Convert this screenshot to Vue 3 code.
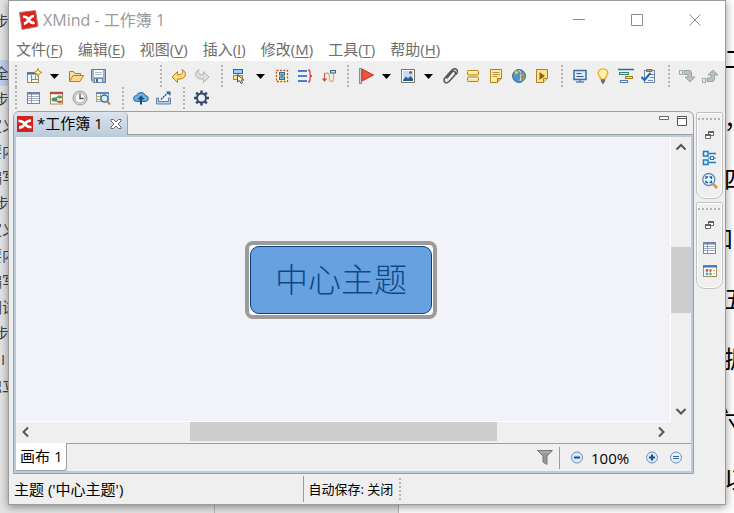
<script setup>
import { ref } from 'vue'

const outline = [
  { text: '步' }, { text: '' }, { text: '全', active: true }, { text: '步' }, { text: '定义', wide: true },
  { text: '要内', wide: true }, { text: '编写', wide: true }, { text: '步' }, { text: '定义', wide: true },
  { text: '要内', wide: true }, { text: '编写', wide: true }, { text: '调试', wide: true }, { text: '步' },
  { text: 'I', narrow: true }, { text: '独立', wide: true },
]

const paragraphs = [
  { text: '二' }, { text: '，' }, { text: '四' }, { text: '和', tail: true },
  { text: '五' }, { text: '据' }, { text: '六', tuck: true }, { text: '以' },
]

const menus = [
  ['文件', 'F'], ['编辑', 'E'], ['视图', 'V'], ['插入', 'I'], ['修改', 'M'], ['工具', 'T'], ['帮助', 'H'],
]

const toolRows = [
  [
    { wide: true, items: ['new', 'caret', 'open', 'save'] },
    { items: ['undo', 'redo'] },
    { items: ['topic', 'caret', 'boundary', 'summary', 'relation'] },
    { items: ['flag', 'caret', 'image', 'caret', 'clip', 'label', 'note', 'globe', 'audio'] },
    { items: ['present', 'bulb', 'gantt', 'task'] },
    { items: ['drill', 'up'] },
  ],
  [
    { items: ['sheet', 'styles', 'history', 'find'] },
    { items: ['cloud', 'share'] },
    { items: ['gear'] },
  ],
]

const sidePanels = [
  { id: 'views', items: ['outline', 'overview'] },
  { id: 'tools', items: ['sheet', 'markers'] },
]

const names = {
  new: '新建', caret: '更多', open: '打开', save: '保存', undo: '撤销', redo: '重做', topic: '主题',
  boundary: '外框', summary: '概要', relation: '联系', flag: '图标', image: '图片', clip: '附件',
  label: '标签', note: '备注', globe: '超链接', audio: '录音', present: '演示', bulb: '头脑风暴',
  gantt: '甘特图', task: '任务信息', drill: '下钻', up: '上钻', sheet: '属性', styles: '风格',
  history: '修订', find: '查找', cloud: '上传', share: '分享', gear: '设置', outline: '大纲',
  overview: '概览', markers: '图标库',
}

const icons = {
  new: '<rect x="1.500" y="4.500" width="11" height="10" fill="#edf6fc" stroke="#a08848"/><path d="M1 5.500h10" stroke="#2f78b0" stroke-width="2"/><path d="M5.500 7v7M5 11.500h8" stroke="#a08848"/><path d="M9.500 7v4" stroke="#b29a5c"/><path d="M12 .5l1.200 2.800L16 4.500l-2.800 1.200L12 8.500l-1.200-2.800L8 4.500l2.800-1.200z" fill="#fff3b0" stroke="#b48a1c"/>',
  caret: '<path d="M3 6h9l-4.500 5z" fill="#000"/>',
  open: '<path d="M1.500 13V3.500h4l1.500 2h5.500V8" fill="#f9dfa0" stroke="#b07a24"/><path d="M1.500 13.500l3.500-6h10.500l-3.500 6z" fill="#ffd98c" stroke="#b8792a"/>',
  save: '<path d="M.5 1.500h14v13H2.500l-2-2z" fill="#9db3d2" stroke="#64748f"/><rect x="3" y="2" width="9" height="7" fill="#f8fafc"/><path d="M4 4.500h7M4 6.500h7" stroke="#a9bbcf"/><rect x="3.500" y="10.500" width="8" height="4" fill="#e6edf5" stroke="#7488a5"/><rect x="5" y="11" width="2" height="3" fill="#51657f"/>',
  undo: '<path d="M1 9l5.500-5.500v3.300C11 7 12.500 4.800 11 1.500c5.500 3 4.800 9.800-4.500 9.700v3.300z" fill="#ffd978" stroke="#bd7e18"/>',
  redo: '<path d="M15 9L9.500 3.500v3.300C5 7 3.500 4.800 5 1.500-.5 4.500.2 11.300 9.500 11.200v3.300z" fill="#dedede" stroke="#b2b2b2"/>',
  topic: '<rect x="1.500" y="1.500" width="9" height="4" fill="#9cccf7" stroke="#1e6bb8"/><path d="M6 6v2" stroke="#555"/><rect x="1.500" y="7.500" width="9" height="4" fill="#fce480" stroke="#b28712"/><path d="M5.500 7v7l2-1.500 1.500 3 1.500-.7-1.400-2.800H12z" fill="#fff" stroke="#555"/>',
  boundary: '<rect x="2.500" y="2.500" width="11" height="11" fill="#fffbb8" stroke="#cf4633" stroke-width="1.300" stroke-dasharray="2 1.400"/><path d="M8 6v4" stroke="#333"/><rect x="5.500" y="4.500" width="5" height="2.500" fill="#80bdf0" stroke="#286aa9"/><rect x="5.500" y="9" width="5" height="2.500" fill="#80bdf0" stroke="#286aa9"/>',
  summary: '<path d="M1 3h9M1 8h9M1 13h9" stroke="#4682c9" stroke-width="2"/><path d="M11 2q2 0 2 2v2q0 2 2 2q-2 0-2 2v2q0 2-2 2" fill="none" stroke="#dd3b4c" stroke-width="1.300"/>',
  relation: '<path d="M4.500 12V8q0-3 2.500-3t2.500 3v3q0 2.500 2 2.500t2-2.500V5" fill="none" stroke="#e5ab82" stroke-width="1.300"/><path d="M4.500 5v8" stroke="#c76650"/><path d="M1.800 10.500h5.400L4.500 14z" fill="#c94f3c"/><rect x="10.500" y="2.500" width="5" height="2.500" fill="#bcdff0" stroke="#3b6383"/>',
  flag: '<rect x="1.500" y="0.500" width="2" height="15" fill="#ccc" stroke="#8b8b8b"/><path d="M4 1l11.500 6L4 13z" fill="#f0503d" stroke="#c43221"/>',
  image: '<rect x="1.500" y="1.500" width="13" height="13" fill="#fff" stroke="#7b7768"/><rect x="3" y="3" width="10" height="10" fill="#c0def6"/><path d="M3 12l3-3.500 2 2L10.500 8l2.500 3v2H3z" fill="#285d94"/><path d="M9 4.500h3M10.500 3v3" stroke="#e93a25" stroke-width="1.500"/>',
  clip: '<path d="M4.500 10.500L10 4q1.800-2 3 0t-.5 3.500L7 13.500q-2.500 2.500-4.300.5-1.600-2 .5-4.500l6.300-7q3-3 5.200-.8 1.800 2-.7 4.800" fill="none" stroke="#555" stroke-width="1.500"/>',
  label: '<rect x="2.500" y="2.500" width="11" height="4.500" rx="1" fill="#ffe590" stroke="#b5850e"/><rect x="2.500" y="9" width="11" height="4.500" rx="1" fill="#ffe590" stroke="#b5850e"/><path d="M4 4h8M4 10.500h8" stroke="#fff7d6"/>',
  note: '<path d="M2.500 1.500h11v9l-4 4h-7z" fill="#ffeaa0" stroke="#a98420"/><path d="M9.500 14.500v-4h4" fill="#d9b54a" stroke="#a98420"/><path d="M4.500 4.500h7M4.500 6.500h7M4.500 8.500h5" stroke="#b59544"/>',
  globe: '<circle cx="8" cy="8" r="6.500" fill="#4b91d3" stroke="#4b6b95"/><path d="M2.500 5q2-3 5.500-3l1 2-3 3-2 .5zM9 7l4-3 1.500 5-3 4.500-3-3z" fill="#79a65a"/><path d="M8 2q3.500 3 1 11" fill="none" stroke="#dfeaf6"/><path d="M4 3l3 1-2 2z" fill="#d6ecff"/><path d="M9 4.500l2 2M10 10l2-2" stroke="#cc4e52"/>',
  audio: '<path d="M2.500 1.500h11v9l-4 4h-7z" fill="#ffe38c" stroke="#a98420"/><path d="M9.500 14.500v-4h4" fill="#f5d77b" stroke="#a98420"/><path d="M5.500 4l5.500 4-5.500 4z" fill="#8a6410"/>',
  present: '<rect x="2" y="2.500" width="12" height="9" fill="#ddecfa" stroke="#356dac" stroke-width="1.500"/><path d="M4.500 5.500h5M4.500 8.500h7" stroke="#42597e"/><path d="M8 12v2M4 14h8" stroke="#5c85b9" stroke-width="1.500"/>',
  bulb: '<path d="M5.500 11q0-2-1.500-3.500Q2.300 5 4 2.500 5.500.8 8 .8t4 1.700q1.700 2.500 0 5Q10.500 9 10.500 11z" fill="#fff0a0" stroke="#f0a62b" stroke-width="1.200"/><path d="M6.500 5l1.500 2 1.500-2M8 7v3" fill="none" stroke="#fffef3"/><path d="M5.800 12h4.400M6 13.500h4M7 15h2" stroke="#65707c" stroke-width="1.300"/>',
  gantt: '<path d="M0 1.500h16" stroke="#2367a8" stroke-width="1.500"/><rect x="1.500" y="4.500" width="9" height="2" fill="#cae8d3" stroke="#36866b"/><rect x="7.500" y="8.500" width="7" height="2" fill="#ffe17b" stroke="#a77d1c"/><rect x="2.500" y="12.500" width="7" height="2" fill="#d8e8ff" stroke="#5f7eb6"/>',
  task: '<rect x="3.500" y="2.500" width="10" height="12" fill="#edf3fb" stroke="#7484a3"/><path d="M5.500 3.500v-2h5.500v2z" fill="#c99c70" stroke="#8a6a4d"/><path d="M9 6.500h4M9 9.500h4M7 12.500h5" stroke="#6e8dbd"/><path d="M.5 9l3 3L9.500 5" fill="none" stroke="#1669bb" stroke-width="2"/>',
  drill: '<rect x=".5" y="2.500" width="3" height="4" fill="#eee" stroke="#9eaaa5"/><path d="M5 2.500h5q2.500 0 2.500 2.500v4H16l-5 5-5-5h3V6.500H5z" fill="#b9c2bb" stroke="#99a59d"/>',
  up: '<rect x=".5" y="10.500" width="3" height="4" fill="#eee" stroke="#9da8b8"/><path d="M5 13.500h5q2.500 0 2.500-2.500V7H16l-5-5-5 5h3v3H5z" fill="#b9c2bb" stroke="#99a59d"/>',
  sheet: '<rect x="1.500" y="2.500" width="12" height="11" fill="#fff" stroke="#7784a2"/><path d="M1 3.500h13" stroke="#6f82ad" stroke-width="2"/><path d="M2 6.500h11M2 8.500h11M2 10.500h11" stroke="#a3aec6"/><path d="M5.500 4v9" stroke="#8c9ab7"/>',
  styles: '<rect x="1.500" y="2.500" width="12" height="11.500" fill="#fff" stroke="#a98b57"/><path d="M1 3h13" stroke="#b4513c" stroke-width="2.500"/><path d="M4 10l4-3h3M4 10l6 2" fill="none" stroke="#377e5b"/><rect x="2.500" y="7.500" width="6" height="4" rx="2" fill="#479665"/><rect x="8.500" y="5.500" width="4.500" height="3" rx="1" fill="#4ba06d"/><rect x="8.500" y="10.500" width="4.500" height="2.500" rx="1" fill="#d35843"/>',
  history: '<circle cx="8" cy="8" r="7" fill="#ddd" stroke="#989898"/><circle cx="8" cy="8" r="5" fill="#fafafa" stroke="#a6a6a6"/><path d="M8 4v4.500h3.500" fill="none" stroke="#555" stroke-width="1.300"/>',
  find: '<rect x="1.500" y="2.500" width="12" height="9" fill="#f6fafc" stroke="#8c9cb2"/><path d="M1 3h13" stroke="#6587bc" stroke-width="2"/><path d="M5.500 4v8M1 6.500h8M1 9.500h6" stroke="#c0a96f"/><circle cx="9.500" cy="8.500" r="3.500" fill="#d8efff" stroke="#2271b5" stroke-width="1.300"/><path d="M12 11l3 3.500" stroke="#c48332" stroke-width="2"/>',
  cloud: '<path d="M3.500 11.500q-3-.2-3-3t3-3Q4.500 2.500 8 2.500t4.300 3q3 .2 3 3t-3 3z" fill="#69b0df" stroke="#286c9b"/><path d="M8 7v7.500" stroke="#174c7c" stroke-width="2"/><path d="M4.500 9.500L8 5.500l3.500 4z" fill="#174c7c"/>',
  share: '<path d="M.5 8v6h14V8h-2v3.500h-10V8z" fill="#b9cde5" stroke="#6384ad"/><path d="M5 9.500l7-7" stroke="#215f98" stroke-width="1.400" stroke-dasharray="2 .7"/><path d="M10 1.500h4.500V6z" fill="#1763a3"/>',
  gear: '<path d="M7.500.5v15M0 8h15M2.200 2.700l10.600 10.600M12.800 2.700L2.200 13.300" stroke="#34496c" stroke-width="2.500"/><circle cx="7.500" cy="8" r="4.500" fill="#efefef" stroke="#34496c" stroke-width="2"/>',
  outline: '<path d="M7 3.500h7M7 12.500h7" stroke="#2878b4" stroke-width="1.300"/><path d="M6 8h8.500" stroke="#2878b4" stroke-dasharray="2 1"/><rect x="1.500" y="1.500" width="4.500" height="4.500" fill="#e4f5ff" stroke="#187dc3" stroke-width="1.500"/><rect x="1.500" y="10" width="4.500" height="4.500" fill="#e4f5ff" stroke="#187dc3" stroke-width="1.500"/><rect x="8.500" y="6.500" width="3" height="3" fill="#fff" stroke="#187dc3"/>',
  overview: '<circle cx="6.800" cy="6.500" r="6" fill="#eaf7ff" stroke="#6487b5" stroke-width="1.300"/><path d="M4 6V4h2M7.500 4h2v2M9.500 7.500v2h-2M6 9.500H4v-2" fill="none" stroke="#0e61a5" stroke-width="1.300"/><path d="M11 11l4 4" stroke="#d29438" stroke-width="2.500"/>',
  markers: '<rect x="1.500" y="2.500" width="13" height="11" fill="#fff" stroke="#9b9069"/><path d="M1 3.500h14" stroke="#3b79bc" stroke-width="2"/><circle cx="5" cy="7.500" r="1.400" fill="#e04e43"/><circle cx="8.500" cy="7.500" r="1.400" fill="#df6b50"/><circle cx="5" cy="11" r="1.400" fill="#49a6d5"/><circle cx="8.500" cy="11" r="1.400" fill="#76ae4c"/><path d="M11 7.500h2M11 10.500h2" stroke="#e0a54a"/>',
}

const selected = ref(true)
</script>

<template>
  <div class="desktop">
    <aside class="outline-strip">
      <div v-for="(row, i) in outline" :key="i" class="outline-row"
        :class="{ active: row.active, wide: row.wide, narrow: row.narrow }">{{ row.text }}</div>
    </aside>

    <main class="window">
      <header class="titlebar">
        <svg class="app-icon" viewBox="0 0 20 20"><path d="M.5 2.500L16.500.5l2.500 16L3 19.500z" fill="#d9231c" stroke="#b9746d" /><path d="M4 7q3.500-1 6 3t5.500 2.500M5 14q3-1 5-4.500t5-3.500" fill="none" stroke="#fff" stroke-width="2.600" /></svg>
        <h1>XMind - 工作簿 1</h1>
        <div class="window-buttons">
          <button aria-label="最小化"><svg viewBox="0 0 12 12"><path d="M0 5.500h12" /></svg></button>
          <button aria-label="最大化"><svg viewBox="0 0 12 12"><path d="M.5.5h11v11H.5z" /></svg></button>
          <button aria-label="关闭"><svg viewBox="0 0 12 12"><path d="M.5.5l11 11M11.500.5l-11 11" /></svg></button>
        </div>
      </header>

      <nav class="menubar">
        <button v-for="m in menus" :key="m[1]">{{ m[0] }}(<u>{{ m[1] }}</u>)</button>
      </nav>

      <section class="toolbar">
        <div v-for="(row, r) in toolRows" :key="r" class="tool-row">
          <div v-for="(group, g) in row" :key="g" class="tool-group" :class="{ spaced: group.wide }">
            <span class="grip"></span>
            <button v-for="(name, n) in group.items" :key="n" :class="{ drop: name === 'caret' }" :aria-label="names[name]">
              <svg class="icon" viewBox="0 0 16 16" fill="none" v-html="icons[name]"></svg>
            </button>
          </div>
        </div>
      </section>

      <div class="workbench">
        <section class="editor">
          <div class="tabs">
            <div class="tab">
              <svg class="tab-icon" viewBox="0 0 16 16"><path d="M0 0h16v16H0z" fill="#d3211d" /><path d="M1.500 5q4-.5 6.500 3t6.500 3M2 11.500q4 0 6-3.500t6-3.500" fill="none" stroke="#fff" stroke-width="2.600" /></svg>
              <span>*工作簿 1</span>
              <button aria-label="关闭标签"><svg viewBox="0 0 12 12"><path d="M1 1.500h2.500L6 4l2.500-2.500H11V3L8 6l3 3v1.500H8.500L6 8l-2.500 2.500H1V9l3-3-3-3z" fill="#fff" stroke="#666" /></svg></button>
            </div>
            <div class="tab-actions">
              <button aria-label="最小化视图"><svg viewBox="0 0 10 12"><path d="M.5 1.500h9v3h-9z" fill="#fff" stroke="#666" /></svg></button>
              <button aria-label="最大化视图"><svg viewBox="0 0 10 12"><path d="M.5 1.500h9v9h-9zM.5 3.500h9" fill="#fff" stroke="#555" /></svg></button>
            </div>
          </div>

          <div class="canvas-grid">
            <div class="canvas">
              <button class="topic" :class="{ selected }" @click="selected = !selected"><span>中心主题</span></button>
            </div>
            <div class="scroll vertical">
              <button aria-label="向上"><svg viewBox="0 0 12 12"><path d="M1.500 8.500L6 4l4.500 4.500" /></svg></button>
              <div class="track"><div class="thumb"></div></div>
              <button aria-label="向下"><svg viewBox="0 0 12 12"><path d="M1.500 4L6 8.500 10.500 4" /></svg></button>
            </div>
            <div class="scroll horizontal">
              <button aria-label="向左"><svg viewBox="0 0 12 12"><path d="M8 1.500L3.500 6 8 10.500" /></svg></button>
              <div class="track"><div class="thumb"></div></div>
              <button aria-label="向右"><svg viewBox="0 0 12 12"><path d="M4 1.500L8.500 6 4 10.500" /></svg></button>
            </div>
          </div>

          <div class="sheets">
            <button class="sheet-tab">画布 1</button>
            <div class="zoom">
              <button aria-label="筛选"><svg class="icon" viewBox="0 0 16 16"><path d="M.5.5h15L10 6v8.500L6 12V6z" fill="#999" stroke="#777" /><path d="M3 2h10" stroke="#bbb" /></svg></button>
              <span class="divider"></span>
              <button aria-label="缩小"><svg class="icon" viewBox="0 0 16 16"><circle cx="8" cy="7.500" r="5.500" fill="#d8eafa" stroke="#6e8fbd" /><path d="M5 7.500h6" stroke="#174e94" stroke-width="2" /></svg></button>
              <span class="percent">100%</span>
              <button aria-label="放大"><svg class="icon" viewBox="0 0 16 16"><circle cx="8" cy="7.500" r="5.500" fill="#d8eafa" stroke="#6e8fbd" /><path d="M5 7.500h6M8 4.500v6" stroke="#174e94" stroke-width="2" /></svg></button>
              <button aria-label="实际大小"><svg class="icon" viewBox="0 0 16 16"><circle cx="8" cy="7.500" r="5.500" fill="#e3f0fc" stroke="#6e8fbd" /><path d="M5 6.500h6M5 8.500h6" stroke="#3a69a8" /></svg></button>
            </div>
          </div>
        </section>

        <aside class="sidebar">
          <div v-for="p in sidePanels" :key="p.id" class="side-panel">
            <span class="grip-h"></span>
            <button aria-label="还原"><svg class="icon" viewBox="0 0 16 16"><path d="M6.500 4.500h5v4h-5z" fill="#fff" stroke="#6a6260" /><path d="M6 5h6" stroke="#6a6260" stroke-width="2" /><path d="M3.500 7.500h5v4h-5z" fill="#fff" stroke="#6a6260" /><path d="M3 8h6" stroke="#6a6260" stroke-width="2" /></svg></button>
            <button v-for="name in p.items" :key="name" :aria-label="names[name]">
              <svg class="icon" viewBox="0 0 16 16" fill="none" v-html="icons[name]"></svg>
            </button>
          </div>
        </aside>
      </div>

      <footer class="statusbar">
        <span class="status-text">主题 ('中心主题')</span>
        <span class="autosave">自动保存: 关闭</span>
        <span class="grip"></span>
      </footer>
    </main>

    <aside class="page-strip">
      <div v-for="(p, i) in paragraphs" :key="i" class="paragraph" :class="{ tail: p.tail, tuck: p.tuck }">{{ p.text }}</div>
    </aside>
  </div>
</template>

<style>
body {
  margin: 0;
}
</style>

<style scoped>
.desktop {
  display: grid;
  grid-template-columns: 8px minmax(0, 1fr) 8px;
  min-height: 100vh;
  overflow: hidden;
  font-family: "Open Sans", "Noto Sans CJK SC", sans-serif;
  font-size: 15px;
  color: #000;
  background: linear-gradient(90deg, #e2e2e2 214px, #b4b4b4 214px, #b4b4b4 215px, #e2e2e2 215px, #e2e2e2 398px, #b4b4b4 398px, #b4b4b4 399px, #fcfcfc 399px);
}

button {
  display: inline-flex;
  align-items: center;
  justify-content: center;
  margin: 0;
  padding: 0;
  border: 0;
  background: none;
  font: inherit;
  color: inherit;
}

svg {
  display: block;
  flex: none;
}

.icon {
  width: 16px;
  height: 16px;
}

.outline-strip {
  overflow: hidden;
  padding-top: 8px;
  color: #444;
}

.outline-row {
  height: 26px;
  line-height: 26px;
  white-space: nowrap;
  text-indent: -6px;
}

.outline-row.wide {
  text-indent: -13px;
}

.outline-row.narrow {
  text-indent: 1px;
}

.outline-row.active {
  background: #bfd0ef;
}

.page-strip {
  overflow: hidden;
  padding-top: 29px;
  font-size: 24px;
}

.paragraph {
  height: 60px;
  line-height: 60px;
  white-space: nowrap;
  text-indent: -2px;
}

.paragraph.tail {
  text-indent: -17px;
}

.paragraph.tuck {
  text-indent: -12px;
}

.window {
  z-index: 1;
  display: flex;
  flex-direction: column;
  min-width: 0;
  margin-bottom: 8px;
  border: 1px solid #9b9b9b;
  background: #efefef;
  box-shadow: 0 2px 8px rgba(0, 0, 0, 0.4);
}

.titlebar {
  display: flex;
  align-items: center;
  height: 37px;
  padding: 0 1px 0 10px;
  background: #fff;
}

.app-icon {
  width: 20px;
  height: 20px;
  margin-right: 4px;
}

h1 {
  flex: 1;
  margin: 0;
  font-size: 16px;
  font-weight: 400;
  line-height: 36px;
  color: #999;
}

.window-buttons {
  display: flex;
}

.window-buttons button {
  width: 58px;
  height: 36px;
}

.window-buttons svg {
  width: 12px;
  height: 12px;
  fill: none;
  stroke: #8c8c8c;
}

.menubar {
  display: flex;
  gap: 15px;
  height: 23px;
  padding-left: 7px;
  background: #fff;
  color: #6d6d6d;
}

.menubar button {
  display: block;
  line-height: 23px;
  white-space: nowrap;
}

.menubar u {
  text-underline-offset: 2px;
}

.toolbar {
  padding: 4px 0 2px 6px;
}

.tool-row {
  display: flex;
  gap: 8px;
  height: 22px;
}

.tool-group {
  display: flex;
  align-items: center;
}

.tool-group.spaced {
  margin-right: 42px;
}

.tool-group button {
  width: 23px;
  height: 22px;
}

.tool-group button.drop {
  width: 19px;
}

.grip {
  width: 2px;
  height: 22px;
  margin-right: 5px;
  background: repeating-linear-gradient(#b4b4b4 0, #b4b4b4 2px, transparent 2px, transparent 4px);
}

.workbench {
  display: flex;
  flex: 1;
  gap: 2px;
  padding: 0 2px 0 4px;
}

.editor {
  display: flex;
  flex: 1;
  flex-direction: column;
  min-width: 0;
  border: 1px solid #a0a0a0;
  border-radius: 6px 6px 0 0;
}

.tabs {
  display: flex;
  justify-content: space-between;
  height: 23px;
}

.tab {
  display: flex;
  align-items: center;
  gap: 4px;
  padding: 0 5px 0 3px;
  border-right: 1px solid #a0a0a0;
  border-radius: 5px 5px 0 0;
  background: linear-gradient(#dce4ed, #bdcddc);
  white-space: nowrap;
}

.tab span {
  height: 23px;
  line-height: 22px;
}

.tab-icon {
  width: 16px;
  height: 16px;
}

.tab button {
  margin-left: 3px;
}

.tab button svg {
  width: 12px;
  height: 12px;
}

.tab-actions {
  display: flex;
  flex: 1;
  align-items: flex-start;
  justify-content: flex-end;
  gap: 8px;
  padding: 3px 6px 0 0;
  border-bottom: 1px solid #a0a0a0;
}

.tab-actions svg {
  width: 10px;
  height: 12px;
}

.canvas-grid {
  display: grid;
  flex: 1;
  grid-template-columns: minmax(0, 1fr) 20px;
  grid-template-rows: minmax(0, 1fr) 21px;
  border: solid #bdccda;
  border-width: 2px 2px 0;
}

.canvas {
  display: flex;
  align-items: center;
  justify-content: center;
  padding: 2px 4px 0 0;
  border: solid #fff;
  border-width: 0 1px 1px 0;
  background: #f2f3f9;
}

.topic {
  padding: 1px;
  border: 4px solid transparent;
  border-radius: 8px;
}

.topic.selected {
  border-color: #9b9b9b;
  background: #fff;
}

.topic span {
  padding: 0 24px 4px;
  border: 1px solid #07447f;
  border-radius: 9px;
  background: #68a1df;
  font-family: "Noto Sans CJK SC", sans-serif;
  font-size: 33px;
  font-weight: 300;
  line-height: 62px;
  color: #0b4a8a;
}

.scroll {
  display: flex;
}

.vertical {
  flex-direction: column;
  padding-bottom: 1px;
}

.horizontal {
  grid-column: 1;
}

.scroll button {
  width: 20px;
  height: 20px;
}

.scroll svg {
  width: 12px;
  height: 12px;
  fill: none;
  stroke: #555;
  stroke-width: 2;
}

.track {
  display: flex;
  flex: 1;
}

.vertical .track {
  flex-direction: column;
}

.thumb {
  background: #cdcdcd;
}

.vertical .thumb {
  height: 27%;
  margin-top: 90px;
}

.horizontal .thumb {
  width: 50%;
  height: 19px;
  margin-left: 25%;
}

.sheets {
  display: flex;
  justify-content: space-between;
  height: 28px;
  border: solid #bdccda;
  border-width: 0 2px 2px;
}

.sheet-tab {
  padding: 0 4px 3px;
  border: solid #a0a0a0;
  border-width: 0 1px 1px 0;
  border-radius: 0 0 3px 0;
  background: #fff;
  white-space: nowrap;
}

.zoom {
  display: flex;
  flex: 1;
  align-items: center;
  justify-content: flex-end;
  padding-right: 7px;
  border-top: 1px solid #a0a0a0;
}

.divider {
  width: 1px;
  height: 22px;
  margin: 0 9px 0 6px;
  background: #999;
}

.percent {
  width: 40px;
  margin: 0 13px 0 6px;
}

.zoom button:last-child {
  margin-left: 8px;
}

.sidebar {
  display: flex;
  flex-direction: column;
  gap: 3px;
  width: 27px;
  padding-top: 1px;
}

.side-panel {
  display: flex;
  flex-direction: column;
  align-items: center;
  height: 85px;
  border: 1px solid #c2c2c2;
  border-radius: 2px 2px 9px 9px;
  box-shadow: inset 0 0 0 1px #fff;
}

.grip-h {
  width: 23px;
  height: 2px;
  margin: 5px 0 3px;
  background: repeating-linear-gradient(90deg, #b5b5b5 0, #b5b5b5 2px, transparent 2px, transparent 4px);
}

.side-panel button {
  height: 23px;
}

.statusbar {
  display: flex;
  align-items: center;
  height: 30px;
}

.status-text {
  box-sizing: border-box;
  width: 41%;
  padding-left: 5px;
  line-height: 30px;
  white-space: nowrap;
}

.autosave {
  padding: 0 6px 0 5px;
  border-left: 1px solid #999;
  font-size: 13px;
  line-height: 26px;
  white-space: nowrap;
}
</style>
